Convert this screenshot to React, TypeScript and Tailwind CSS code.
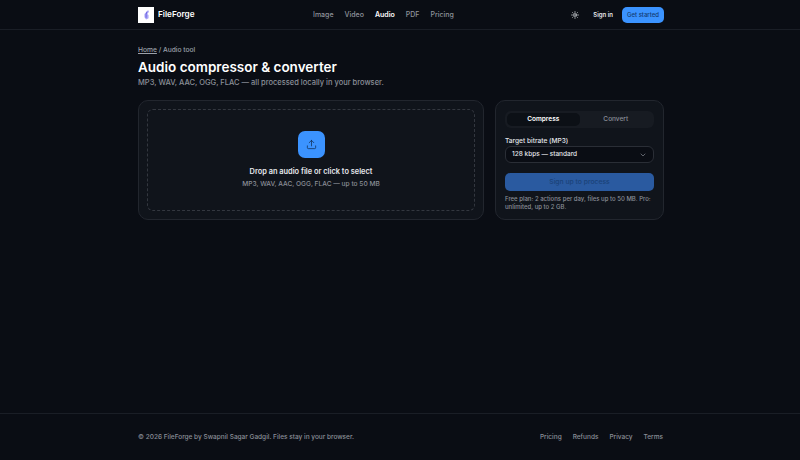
import { ChevronDown, Sun, Upload } from "lucide-react";

const navLinks = ["Image", "Video", "Audio", "PDF", "Pricing"];
const footerLinks = ["Pricing", "Refunds", "Privacy", "Terms"];

function Logo() {
  return (
    <div className="flex h-4 w-4 items-center justify-center bg-white">
      <svg viewBox="0 0 16 16" className="h-[13px] w-[13px]" fill="none">
        <path d="M10 2.5 5.5 7.5v4l2 2.5 3-1.5V8.5L9 7.5l2-3z" fill="#a9a4f7" />
        <path d="M8.5 4.5 7.5 8v4" stroke="#5f58dc" strokeWidth="1" />
      </svg>
    </div>
  );
}

export default function App() {
  return (
    <div className="flex h-[460px] w-[800px] flex-col overflow-hidden bg-[#0a0d14] font-['Inter',sans-serif] text-white antialiased">
      <header className="flex h-[30px] shrink-0 items-center border-b border-[#1a1e26] pl-[138px] pr-[136px]">
        <div className="flex w-[175px] items-center gap-[4px]">
          <Logo />
          <span className="text-[8.2px] font-semibold">FileForge</span>
        </div>
        <nav className="flex items-center gap-[11px] pt-[1px] text-[7px] font-medium text-[#8f939b]">
          {navLinks.map((link) => (
            <span key={link} className={link === "Audio" ? "font-semibold text-white" : ""}>
              {link}
            </span>
          ))}
        </nav>
        <div className="ml-auto flex items-center">
          <Sun className="h-2 w-2 text-[#d5d8dd]" strokeWidth={2.5} />
          <span className="ml-[14px] text-[6px] font-semibold text-[#e5e7eb]">Sign in</span>
          <span className="ml-[9px] flex h-4 w-[42px] items-center justify-center rounded-[5px] bg-[#3b93ff] text-[6px] font-medium text-[#123a70]">
            Get started
          </span>
        </div>
      </header>

      <main className="flex-1 pl-[138px] pr-[136px] pt-[16px]">
        <p className="text-[6.7px] font-medium leading-[9px] text-[#9ca1aa]">
          <span className="underline">Home</span> / Audio tool
        </p>
        <h1 className="mt-[3px] text-[13.5px] font-semibold leading-[18px]">Audio compressor &amp; converter</h1>
        <p className="mt-[2px] text-[7.5px] font-medium leading-[10px] text-[#8b8f98]">
          MP3, WAV, AAC, OGG, FLAC — all processed locally in your browser.
        </p>

        <div className="mt-[12px] flex gap-[11px]">
          <section className="h-[120px] w-[346px] rounded-[10px] border border-[#22262e] bg-[#10141b] p-[8px]">
            <div className="flex h-full flex-col items-center rounded-[6px] border border-dashed border-[#33373f] pt-[21px]">
              <div className="flex h-[27px] w-[27px] items-center justify-center rounded-[7px] bg-[#3b93ff]">
                <Upload className="h-[11px] w-[11px] text-[#0f2a50]" strokeWidth={1.6} />
              </div>
              <p className="mt-[9px] text-[7.4px] font-semibold leading-[10px] text-[#e5e7eb]">
                Drop an audio file or click to select
              </p>
              <p className="mt-[2px] text-[6.6px] font-medium leading-[10px] text-[#8b8f98]">
                MP3, WAV, AAC, OGG, FLAC — up to 50 MB
              </p>
            </div>
          </section>

          <section className="h-[120px] w-[169px] rounded-[10px] border border-[#22262e] bg-[#10141b] px-[9px] pt-[10px]">
            <div className="flex h-[17px] rounded-[6px] bg-[#171b22] p-[2px] text-[6.5px] font-semibold">
              <span className="flex flex-1 items-center justify-center rounded-[5px] bg-[#0c1016] text-white">Compress</span>
              <span className="flex flex-1 items-center justify-center font-medium text-[#8b8f98]">Convert</span>
            </div>
            <p className="mt-[9px] text-[6.6px] font-medium leading-[9px] text-[#e5e7eb]">Target bitrate (MP3)</p>
            <div className="flex h-[17px] items-center justify-between rounded-[6px] border border-[#2a2e36] bg-[#0a0d14] px-[6px] text-[6.5px] font-medium text-[#e5e7eb]">
              128 kbps — standard
              <ChevronDown className="h-2 w-2 text-[#8b8f98]" />
            </div>
            <div className="mt-[10px] flex h-[18px] items-center justify-center rounded-[5px] bg-[#2a5aa0] text-[6.8px] font-medium text-[#1a4278]">
              Sign up to process
            </div>
            <p className="mt-[4px] text-[6px] font-medium leading-[8px] text-[#8b8f98]">
              Free plan: 2 actions per day, files up to 50 MB. Pro: unlimited, up to 2 GB.
            </p>
          </section>
        </div>
      </main>

      <footer className="flex h-[47px] shrink-0 items-center justify-between border-t border-[#1a1e26] pl-[138px] pr-[137px] pt-[2px] text-[6.5px] font-medium text-[#8b8f98]">
        <span>© 2026 FileForge by Swapnil Sagar Gadgil. Files stay in your browser.</span>
        <div className="flex gap-[11px]">
          {footerLinks.map((link) => (
            <span key={link}>{link}</span>
          ))}
        </div>
      </footer>
    </div>
  );
}
